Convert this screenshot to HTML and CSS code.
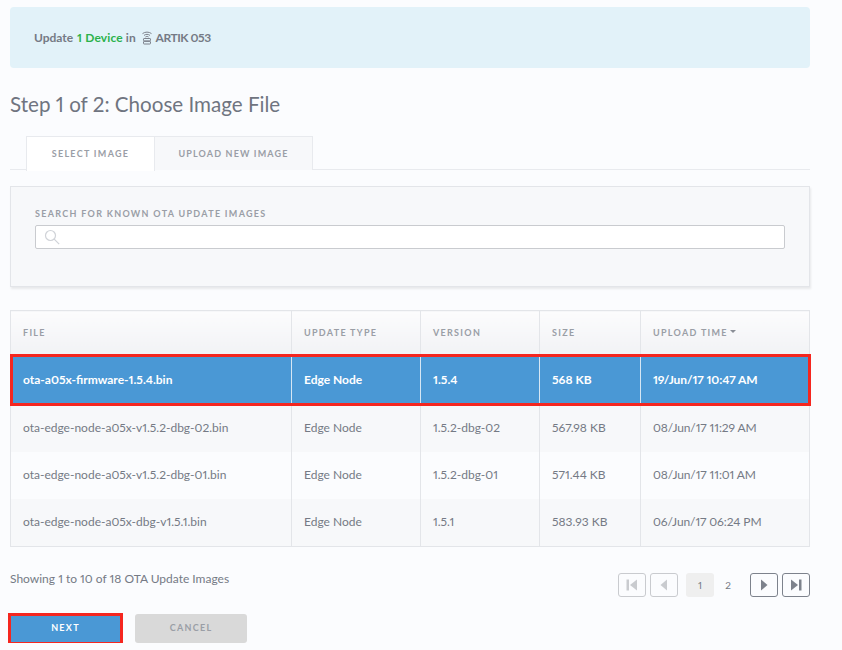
FILE: index.html
```html
<!DOCTYPE html>
<html lang="en">
<head>
    <meta charset="UTF-8">
    <title>Update Device</title>
    <link rel="stylesheet" href="styles.css">
</head>
<body>
    <div class="banner">
        Update <span class="green">1 Device</span> in
        <svg class="gw-icon" width="12" height="14" viewBox="0 0 12 14" fill="none" stroke="#7d828c" stroke-width="1">
            <path d="M1.5 2.6C4 .6 8 .6 10.5 2.6"/>
            <path d="M3 4.4C4.8 3 7.2 3 9 4.4"/>
            <path d="M4.4 6C5.4 5.3 6.6 5.3 7.6 6"/>
            <rect x="2.5" y="7.5" width="7" height="2.4" rx=".6"/>
            <rect x="2.5" y="10.4" width="7" height="2.6" rx=".6"/>
        </svg>
        <span class="gw-name">ARTIK 053</span>
    </div>

    <h2>Step 1 of 2: Choose Image File</h2>

    <div class="tabs">
        <div class="tab active">SELECT IMAGE</div>
        <div class="tab">UPLOAD NEW IMAGE</div>
    </div>

    <div class="search-panel">
        <label class="caps">SEARCH FOR KNOWN OTA UPDATE IMAGES</label>
        <div class="search-box">
            <svg width="16" height="16" viewBox="0 0 16 16" fill="none" stroke="#d0d3d8" stroke-width="1.2">
                <circle cx="6.5" cy="6.5" r="5"/>
                <path d="M10.2 10.2l5 5"/>
            </svg>
        </div>
    </div>

    <table>
        <colgroup>
            <col class="c1"><col class="c2"><col class="c3"><col class="c4"><col class="c5">
        </colgroup>
        <thead>
            <tr>
                <th>FILE</th>
                <th>UPDATE TYPE</th>
                <th>VERSION</th>
                <th>SIZE</th>
                <th>UPLOAD TIME<span class="caret"></span></th>
            </tr>
        </thead>
        <tbody>
            <tr class="selected">
                <td>ota-a05x-firmware-1.5.4.bin</td>
                <td>Edge Node</td>
                <td>1.5.4</td>
                <td>568 KB</td>
                <td class="time">19/Jun/17 10:47 AM</td>
            </tr>
            <tr>
                <td>ota-edge-node-a05x-v1.5.2-dbg-02.bin</td>
                <td>Edge Node</td>
                <td>1.5.2-dbg-02</td>
                <td>567.98 KB</td>
                <td class="time">08/Jun/17 11:29 AM</td>
            </tr>
            <tr>
                <td>ota-edge-node-a05x-v1.5.2-dbg-01.bin</td>
                <td>Edge Node</td>
                <td>1.5.2-dbg-01</td>
                <td>571.44 KB</td>
                <td class="time">08/Jun/17 11:01 AM</td>
            </tr>
            <tr>
                <td>ota-edge-node-a05x-dbg-v1.5.1.bin</td>
                <td>Edge Node</td>
                <td>1.5.1</td>
                <td>583.93 KB</td>
                <td class="time">06/Jun/17 06:24 PM</td>
            </tr>
        </tbody>
    </table>

    <div class="table-footer">
        <div class="showing">Showing 1 to 10 of 18 OTA Update Images</div>
        <div class="pager">
            <button class="pg-btn off"><svg width="14" height="14" viewBox="0 0 14 14"><rect x="1.5" y="1.5" width="2.5" height="11"/><path d="M12 1.5v11L5 7z"/></svg></button>
            <button class="pg-btn off"><svg width="14" height="14" viewBox="0 0 14 14"><path d="M10 1.5v11L3.5 7z"/></svg></button>
            <span class="pg-num current">1</span>
            <span class="pg-num">2</span>
            <button class="pg-btn"><svg width="14" height="14" viewBox="0 0 14 14"><path d="M4 1.5v11L10.5 7z"/></svg></button>
            <button class="pg-btn"><svg width="14" height="14" viewBox="0 0 14 14"><path d="M2 1.5v11L9 7z"/><rect x="10" y="1.5" width="2.5" height="11"/></svg></button>
        </div>
    </div>

    <div class="actions">
        <button class="btn next">NEXT</button>
        <button class="btn cancel">CANCEL</button>
    </div>
</body>
</html>
```

FILE: styles.css
```css
body {
    font-family: "Lato", "Liberation Sans", sans-serif;
    font-variant-numeric: proportional-nums;
    background-color: #fbfcfe;
    color: #757a85;
    margin: 0;
    padding: 7px 32px 0 10px;
    font-size: 12px;
}
.banner {
    background: #e2f2f9;
    border-radius: 4px;
    height: 61px;
    line-height: 61px;
    padding-left: 24px;
    font-weight: 700;
    color: #757a85;
}
.green {
    color: #2bb24c;
    letter-spacing: 0.15px;
    margin-left: 1px;
}
.gw-icon {
    vertical-align: -3px;
    margin: 0 0 0 2px;
}
.gw-name {
    letter-spacing: -0.45px;
}
h2 {
    font-size: 20.6px;
    font-weight: 400;
    line-height: 26px;
    margin: 23px 0 19px;
    color: #6f7480;
}
.tabs {
    display: flex;
    padding-left: 16px;
    border-bottom: 1px solid #e8eaee;
    height: 33px;
}
.tab {
    width: 157px;
    height: 33px;
    line-height: 34px;
    text-align: center;
    font-size: 9px;
    font-weight: 700;
    letter-spacing: 1.15px;
    color: #9a9ea6;
    background: #f7f8fa;
    border: 1px solid #e8eaee;
    border-left: none;
    border-bottom: none;
}
.tab.active {
    width: 127px;
    letter-spacing: 1.3px;
    background: #fff;
    border-left: 1px solid #e8eaee;
    height: 34px;
}
.search-panel {
    margin-top: 16px;
    padding: 21px 24px 0;
    height: 78px;
    background: #f7f8fa;
    border: 1px solid #e3e5e9;
    box-shadow: 1px 2px 2px rgba(0, 0, 0, 0.08);
}
.caps {
    display: block;
    font-size: 9px;
    font-weight: 700;
    letter-spacing: 1.3px;
    color: #9a9ea6;
    line-height: 11px;
}
.search-box {
    margin-top: 6px;
    height: 22px;
    background: #fff;
    border: 1px solid #c9cbcf;
    border-radius: 2px;
    padding-left: 8px;
    display: flex;
    align-items: center;
}
table {
    width: 799px;
    margin-top: 23px;
    border-collapse: collapse;
    table-layout: fixed;
    border: 1px solid #e3e5e9;
}
.c1 { width: 281px; }
.c2 { width: 129px; }
.c3 { width: 119px; }
.c4 { width: 101px; }
.c5 { width: 169px; }
th {
    height: 44px;
    box-sizing: border-box;
    padding: 0 12px;
    text-align: left;
    font-size: 9px;
    font-weight: 700;
    letter-spacing: 1.3px;
    color: #9a9ea6;
    background: linear-gradient(#fcfcfd, #f1f2f5);
    border-left: 1px solid #e3e5e9;
}
.caret {
    display: inline-block;
    margin-left: 2px;
    vertical-align: 3px;
    border-left: 3px solid transparent;
    border-right: 3px solid transparent;
    border-top: 3px solid #8a8e96;
}
td {
    height: 47px;
    padding: 0 12px 1px;
    box-sizing: border-box;
    font-size: 12px;
    border-left: 1px solid #e3e5e9;
    background: #fbfcfe;
}
td.time {
    letter-spacing: -0.1px;
}
tbody tr:nth-child(even) td {
    background: #f7f8fa;
}
tbody tr:last-child td {
    height: 48px;
}
tr.selected {
    outline: 3px solid #f5261f;
    outline-offset: -2.5px;
}
tr.selected td {
    height: 50px;
    background: #4a98d5;
    color: #fff;
    font-weight: 700;
    border-left-color: #d5e6f4;
}
.table-footer {
    display: flex;
    justify-content: space-between;
    margin-top: 26px;
}
.showing {
    line-height: 12px;
}
.pager {
    display: flex;
    align-items: center;
    gap: 4px;
}
.pg-btn {
    width: 28px;
    height: 24px;
    padding: 0;
    background: transparent;
    border: 1px solid #7d828c;
    border-radius: 3px;
    display: flex;
    align-items: center;
    justify-content: center;
    fill: #7d828c;
}
.pg-btn.off {
    border-color: #c9cbcf;
    fill: #c9cbcf;
}
.pg-num {
    width: 28px;
    height: 24px;
    line-height: 24px;
    text-align: center;
    font-size: 10px;
    border-radius: 3px;
}
.pg-num.current {
    background: #efefef;
    margin: 0 -4px 0 4px;
}
.pg-num + .pg-btn {
    margin-left: 4px;
}
.actions {
    display: flex;
    gap: 15px;
    margin-top: 17px;
}
.btn {
    font-family: inherit;
    font-size: 9px;
    font-weight: 700;
    letter-spacing: 1.3px;
    height: 29px;
    width: 112px;
    border: none;
    border-radius: 3px;
    padding: 0 0 2px;
}
.next {
    background: #4a98d5;
    color: #fff;
    border-radius: 0;
    width: 109px;
    height: 26px;
    margin: 2px 0 0 1px;
    padding: 0 0 3px;
    outline: 3px solid #f5261f;
}
.cancel {
    background: #d9d9d9;
    color: #9a9ea6;
}
```
